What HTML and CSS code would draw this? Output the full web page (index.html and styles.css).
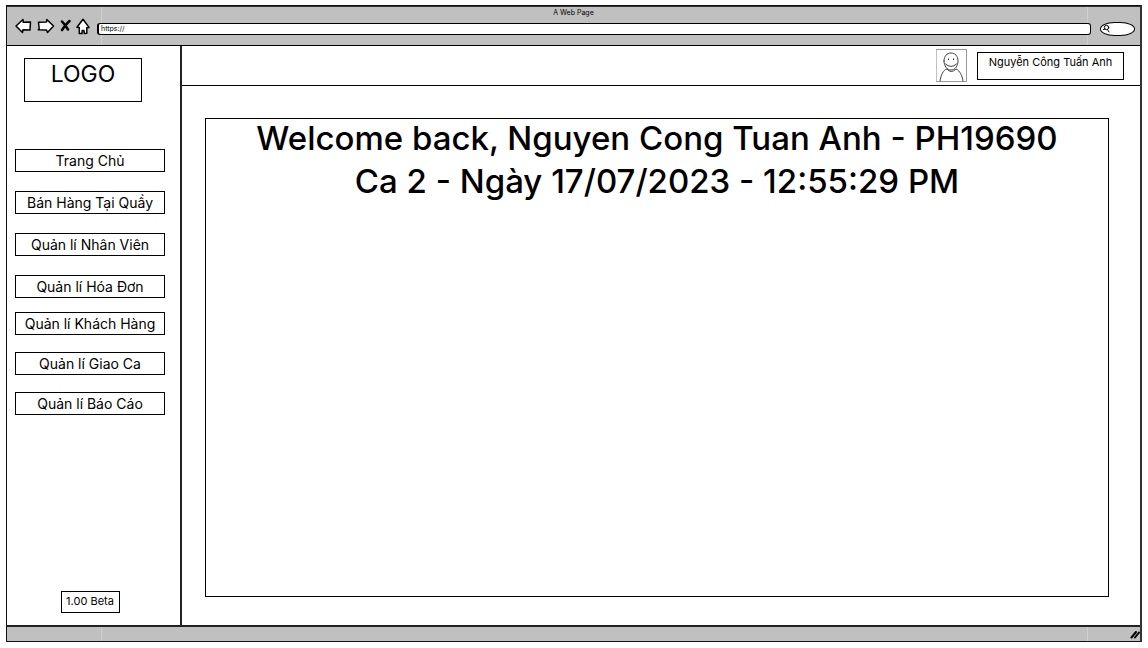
FILE: index.html
```html
<!DOCTYPE html>
<html lang="vi">
<head>
<meta charset="utf-8">
<meta name="viewport" content="width=device-width, initial-scale=1">
<title>A Web Page</title>
<link rel="stylesheet" href="styles.css">
</head>
<body>
<div class="browser">
  <header class="chrome">
    <div class="chrome-title">A Web Page</div>
    <div class="toolbar">
      <button class="tool" type="button" aria-label="Back"><svg width="17" height="16" viewBox="0 0 17 16"><path d="M1 8 8 1.500 8.300 4.300 15.500 4 15 12 8 11.700 7.500 14.500Z"/></svg></button>
      <button class="tool" type="button" aria-label="Forward"><svg width="18" height="16" viewBox="0 0 18 16"><path d="M1.500 4.200 9.500 4 9.800 1.500 16.500 8 10.500 14.500 9.500 12 1.200 11.800 2.200 11Z"/></svg></button>
      <button class="tool" type="button" aria-label="Stop"><svg width="11" height="14" viewBox="0 0 11 14"><path class="bold" d="M2 2.500 5 6 8 10.500M9.500 2 6 5.500 2 11"/></svg></button>
      <button class="tool" type="button" aria-label="Home"><svg width="14" height="17" viewBox="0 0 14 17"><path d="M7 1.300 1 9.200 3.300 9.500 3.300 15.500 6 15.600 6.200 12.500 8 12.500 8.300 15.600 10.800 15.200 10.800 9.800 13 9.400Z"/></svg></button>
      <input class="address" type="text" value="https://" aria-label="Address">
      <label class="search">
        <svg width="8" height="9" viewBox="0 0 8 9"><circle cx="4.500" cy="3.500" r="2.200"/><path d="M3 5 1.500 5.500M5.500 5.500 7 8"/></svg>
        <input class="search-input" type="search" aria-label="Search">
      </label>
    </div>
  </header>

  <div class="page">
    <aside class="sidebar">
      <div class="logo">LOGO</div>
      <nav class="menu">
        <div class="menu-group">
          <button class="menu-item" type="button">Trang Chủ</button>
          <button class="menu-item" type="button">Bán Hàng Tại Quầy</button>
          <button class="menu-item" type="button">Quản lí Nhân Viên</button>
          <button class="menu-item" type="button">Quản lí Hóa Đơn</button>
        </div>
        <div class="menu-group menu-group-tight">
          <button class="menu-item" type="button">Quản lí Khách Hàng</button>
          <button class="menu-item" type="button">Quản lí Giao Ca</button>
          <button class="menu-item" type="button">Quản lí Báo Cáo</button>
        </div>
      </nav>
      <div class="version">1.00 Beta</div>
    </aside>

    <div class="content">
      <div class="userbar">
        <svg class="avatar" width="31" height="33" viewBox="0 0 31 33" role="img" aria-label="Avatar">
          <rect class="frame" x=".5" y=".5" width="30" height="32"/>
          <path d="M8 12C8 7 11 4 15 4S22 7 22 12C22 17 19 21 15 21S8 17 8 12Z"/>
          <path d="M9.500 15Q15 20 20.500 15M4 32C5 26 7 21 11 20Q15 25 20 20C24 22 26 26 27 32"/>
          <path class="eyes" d="M12.500 10v.5M17.500 10v.5"/>
        </svg>
        <button class="username" type="button">Nguyễn Công Tuấn Anh</button>
      </div>
      <main class="welcome">
        <h1 class="greeting">Welcome back, Nguyen Cong Tuan Anh - PH19690<br>Ca 2 - Ngày 17/07/2023 - 12:55:29 PM</h1>
      </main>
    </div>
  </div>

  <footer class="statusbar">
    <svg width="10" height="9" viewBox="0 0 10 9"><path class="bold" d="M1.500 7.500 6 2M5 7.500 9 2.500"/></svg>
  </footer>
</div>
</body>
</html>
```

FILE: styles.css
```css
* {
  box-sizing: border-box;
}

body {
  margin: 0;
  padding: 5px 6px 6px 6px;
  background: #fff;
  color: #000;
  font-family: Inter, "Noto Sans", sans-serif;
}

button,
input {
  margin: 0;
  padding: 0;
  color: inherit;
  font: inherit;
}

svg {
  display: block;
  fill: none;
  stroke: #000;
  stroke-width: 1;
  stroke-linejoin: round;
  stroke-linecap: round;
}

.browser {
  display: flex;
  flex-direction: column;
  min-height: calc(100vh - 11px);
  border: 1px solid #111;
  border-right: 2px solid #333;
}

.chrome,
.statusbar {
  background:
    linear-gradient(#cfcfcf, #cfcfcf) 94px 0 / 1px 100% no-repeat,
    linear-gradient(#cfcfcf, #cfcfcf) right 52px top 0 / 1px 100% no-repeat,
    #c0c0c0;
}

.chrome {
  height: 40px;
  border-bottom: 1px solid #000;
  border-top: 1px solid #333;
}

.chrome-title {
  height: 11px;
  font-size: 7px;
  line-height: 12px;
  text-align: center;
}

.toolbar {
  display: flex;
  align-items: center;
  gap: 5px;
  padding: 0 5px 0 8px;
  height: 16px;
}

.tool {
  border: 0;
  background: none;
}

.tool svg {
  fill: #fff;
  stroke-width: 1.5;
}

.tool .bold {
  stroke-width: 2.5;
}

.address {
  flex: 1;
  min-width: 0;
  height: 12px;
  margin-top: 5px;
  margin-left: 2px;
  padding-left: 2px;
  border: 1px solid #000;
  border-left-width: 2px;
  border-radius: 3px;
  background: #fff;
  font-size: 7px;
  line-height: 10px;
}

.search {
  display: flex;
  align-items: center;
  width: 35px;
  height: 14px;
  margin-top: 5px;
  margin-left: 4px;
  padding-left: 1px;
  border: 1px solid #000;
  border-radius: 50% / 60%;
  background: #fff;
}

.search-input {
  width: 20px;
  height: 9px;
  border: 0;
  background: none;
  font-size: 7px;
  appearance: none;
}

.page {
  flex: 1;
  display: flex;
}

.sidebar {
  display: flex;
  flex-direction: column;
  width: 175px;
  padding: 12px 15px 12px 8px;
  border-right: 2px solid #222;
}

.logo {
  width: 118px;
  height: 44px;
  margin-left: 9px;
  border: 1px solid #000;
  font-size: 23px;
  line-height: 30px;
  text-align: center;
}

.menu {
  display: flex;
  flex-direction: column;
  gap: 14px;
  margin-top: 47px;
}

.menu-group {
  display: flex;
  flex-direction: column;
  gap: 19px;
}

.menu-group-tight {
  gap: 17px;
}

.menu-item {
  height: 23px;
  border: 1px solid #000;
  background: #fff;
  font-size: 14px;
  line-height: 20px;
  white-space: nowrap;
}

.version {
  align-self: center;
  width: 59px;
  height: 22px;
  margin-top: auto;
  border: 1px solid #000;
  font-size: 11px;
  line-height: 18px;
  text-align: center;
}

.content {
  flex: 1;
  display: flex;
  flex-direction: column;
  min-width: 0;
}

.userbar {
  display: flex;
  align-items: center;
  justify-content: flex-end;
  gap: 10px;
  height: 40px;
  padding-right: 16px;
  border-bottom: 1px solid #000;
}

.avatar {
  stroke: #444;
}

.avatar .frame {
  stroke: #999;
}

.avatar .eyes {
  stroke: #000;
}

.username {
  width: 147px;
  height: 28px;
  padding-bottom: 8px;
  border: 1px solid #000;
  background: #fff;
  font-size: 11px;
  line-height: 18px;
  white-space: nowrap;
}

.welcome {
  flex: 1;
  margin: 32px 31px 28px 23px;
  border: 1px solid #000;
}

.greeting {
  margin: -2px 0 0;
  font-size: 33px;
  font-weight: 500;
  line-height: 43px;
  text-align: center;
}

.statusbar {
  display: flex;
  align-items: center;
  justify-content: flex-end;
  height: 16px;
  border-top: 2px solid #222;
}

.statusbar .bold {
  stroke-width: 2;
}
```
